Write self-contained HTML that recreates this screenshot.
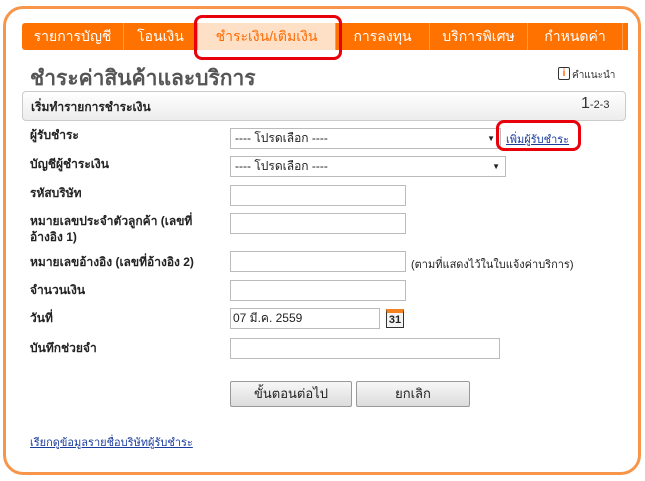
<!DOCTYPE html>
<html><head><meta charset="utf-8"><style>
*{box-sizing:border-box;margin:0;padding:0}
body{width:645px;height:481px;background:#fff;font-family:"Liberation Sans","Noto Sans CJK SC",sans-serif;position:relative;overflow:hidden;color:#222}
.a{position:absolute}
.outer{left:3px;top:6px;width:638px;height:469px;border:3px solid #f7964a;border-radius:20px}
.nav{left:22px;top:23px;width:606px;height:27px;background:#ff7200;border-radius:3px 0 0 3px}
.it{position:absolute;top:0;height:27px;line-height:27px;color:#fff;font-size:14px;text-align:center;border-right:1px solid #ff9a50}
.act{background:#fde0c6;color:#ff6a00}
.red{border:3px solid #e8000a;border-radius:8px}
.lbl{left:30px;font-size:12px;font-weight:bold;color:#222;line-height:16px}
.inp{border:1px solid #bbb;background:#fff;height:21px}
.sel{border:1px solid #bbb;background:#fff;height:21px;font-size:12px;line-height:19px;padding-left:4px}
.sel:after{content:"▼";position:absolute;right:5px;top:0;font-size:8px}
.btn{border:1px solid #999;border-radius:2px;background:linear-gradient(#f7f7f7,#dcdcdc);font-size:13px;text-align:center;line-height:24px;height:26px}
</style></head><body>
<div class="a outer"></div>
<div class="a nav">
<div class="it" style="left:0;width:102px">รายการบัญชี</div>
<div class="it" style="left:102px;width:74px">โอนเงิน</div>
<div class="it act" style="left:176px;width:138px">ชำระเงิน/เติมเงิน</div>
<div class="it" style="left:314px;width:94px">การลงทุน</div>
<div class="it" style="left:408px;width:98px">บริการพิเศษ</div>
<div class="it" style="left:506px;width:95px">กำหนดค่า</div>
</div>
<div class="a red" style="left:194px;top:15px;width:148px;height:45px"></div>
<div class="a" style="left:30px;top:62px;font-size:21px;font-weight:bold;color:#555">ชำระค่าสินค้าและบริการ</div>
<div class="a" style="left:558px;top:67px;width:12px;height:13px;border:1px solid #333;border-radius:2px;font-size:10px;line-height:11px;text-align:center;color:#f60;font-weight:bold">i</div>
<div class="a" style="left:572px;top:68px;font-size:10px;color:#333">คำแนะนำ</div>
<div class="a" style="left:22px;top:91px;width:604px;height:30px;border:1px solid #ccc;border-radius:4px;background:linear-gradient(#fff,#ececec)"></div>
<div class="a" style="left:31px;top:98px;font-size:12px;font-weight:bold">เริ่มทำรายการชำระเงิน</div>
<div class="a" style="left:581px;top:95px;font-size:16px;color:#333">1<span style="font-size:11px">-2-3</span></div>

<div class="a lbl" style="top:127px">ผู้รับชำระ</div>
<div class="a sel" style="left:230px;top:128px;width:271px">---- โปรดเลือก ----</div>
<div class="a" style="left:506px;top:130px;font-size:11px;color:#1a3c9e;text-decoration:underline">เพิ่มผู้รับชำระ</div>
<div class="a red" style="left:496px;top:120px;width:85px;height:31px"></div>

<div class="a lbl" style="top:156px">บัญชีผู้ชำระเงิน</div>
<div class="a sel" style="left:230px;top:156px;width:276px">---- โปรดเลือก ----</div>

<div class="a lbl" style="top:185px">รหัสบริษัท</div>
<div class="a inp" style="left:230px;top:185px;width:176px"></div>
<div class="a lbl" style="top:213px">หมายเลขประจำตัวลูกค้า (เลขที่<br>อ้างอิง 1)</div>
<div class="a inp" style="left:230px;top:213px;width:176px"></div>
<div class="a lbl" style="top:254px">หมายเลขอ้างอิง (เลขที่อ้างอิง 2)</div>
<div class="a inp" style="left:230px;top:251px;width:176px"></div>
<div class="a" style="left:411px;top:255px;font-size:11px">(ตามที่แสดงไว้ในใบแจ้งค่าบริการ)</div>
<div class="a lbl" style="top:282px">จำนวนเงิน</div>
<div class="a inp" style="left:230px;top:280px;width:176px"></div>
<div class="a lbl" style="top:310px">วันที่</div>
<div class="a inp" style="left:230px;top:308px;width:150px;font-size:12px;line-height:19px;padding-left:2px">07 มี.ค. 2559</div>
<div class="a" style="left:386px;top:309px;width:18px;height:19px;border:1px solid #333;border-top:4px solid #f58220;background:#f4f4f4;font-size:11px;font-weight:bold;text-align:center;line-height:14px">31</div>
<div class="a lbl" style="top:340px">บันทึกช่วยจำ</div>
<div class="a inp" style="left:230px;top:338px;width:270px"></div>

<div class="a btn" style="left:230px;top:381px;width:122px">ขั้นตอนต่อไป</div>
<div class="a btn" style="left:356px;top:381px;width:114px">ยกเลิก</div>

<div class="a" style="left:30px;top:433px;font-size:11px;color:#1a3c9e;text-decoration:underline">เรียกดูข้อมูลรายชื่อบริษัทผู้รับชำระ</div>
</body></html>
